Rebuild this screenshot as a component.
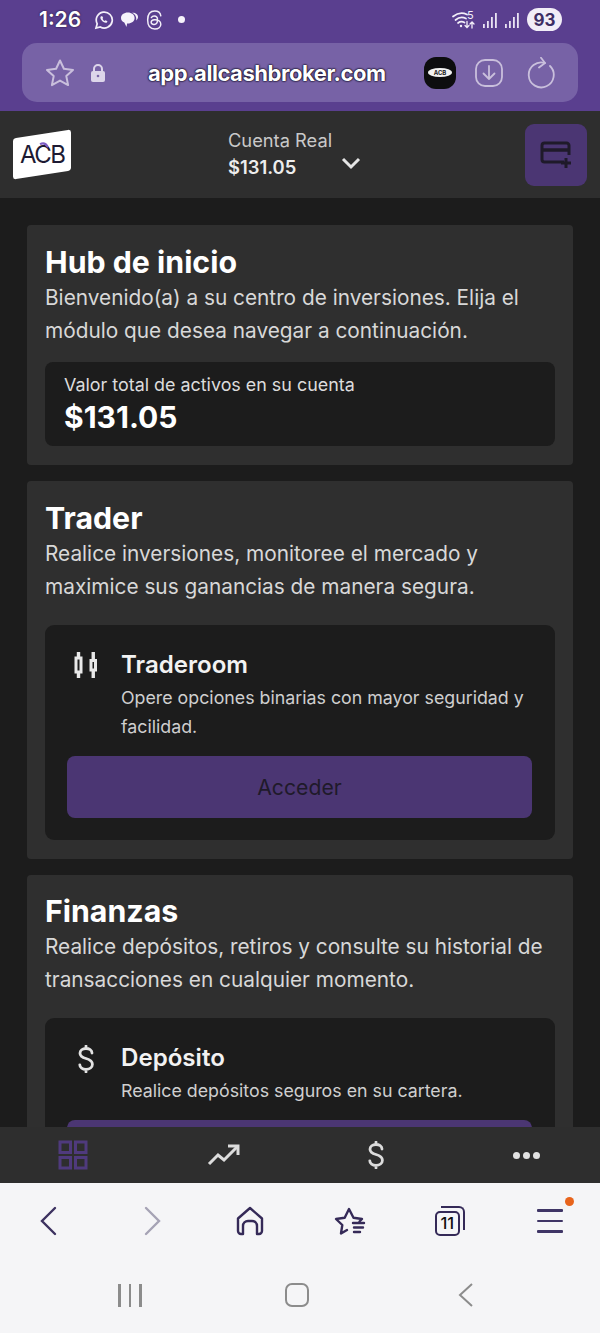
<div class="phone">
  <div class="chrome">
    <div class="status">
      <span class="time">1:26</span>
      <svg class="ic-wa" width="20" height="20" viewBox="0 0 20 20" fill="none" stroke="#f3eff9" stroke-width="1.7">
        <path d="M2 18l1.2-4.2A8 8 0 1 1 6.300 17z" />
        <path d="M7 6.200c-.9.8-.8 2.200.4 3.800 1.300 1.800 3 2.900 4.500 2.800 1 0 1.500-.7 1.500-1.500l-1.800-1-.8.800c-1-.4-1.800-1.200-2.300-2.300l.7-.8-.9-1.800z" fill="#f3eff9" stroke="none" />
      </svg>
      <svg class="ic-msg" width="19" height="19" viewBox="0 0 19 19" fill="#f6f3fb">
        <path d="M1 8c0-3.200 3-5.500 6.800-5.500 3.900 0 6.800 2.300 6.800 5.500s-3 5.500-6.800 5.500l-.7 0-.6 3.500-2.200-4.400C2.300 11.700 1 10 1 8z" />
        <path d="M12 2.800c3.300-.4 6 1.400 6 4.100 0 1.500-.8 2.700-2 3.500.3-1 .4-1.800.1-3C15.600 5.200 14 3.600 12 2.800z" />
      </svg>
      <svg class="ic-th" width="17" height="20" viewBox="1 .5 15 19" fill="none" stroke="#f3eff9" stroke-width="1.400" stroke-linecap="round">
        <path d="M14.500 6C14 3 12 1.500 8.800 1.500 4.500 1.500 2 4.500 2 10s2.500 8.500 6.800 8.500c3.500 0 5.700-2 5.700-4.500 0-2.800-2.500-4.500-6-4.300-2 .1-3.200 1-3.200 2.400 0 1.300 1.200 2.200 2.800 2.100 2.200-.1 3.300-1.700 3.300-4.200 0-2.300-1.200-3.700-3.200-3.700-1.200 0-2.100.5-2.700 1.400" />
      </svg>
      <span class="dot"></span>
      <span class="grow"></span>
      <svg class="ic-wifi" width="24" height="20" viewBox="0 0 24 20" fill="none" stroke="#f3eff9" stroke-width="1.700" stroke-linecap="round">
        <path d="M1 6.500C6 2.500 11 2.500 15 4.500" />
        <path d="M3.500 10C7 7 11 7 14 8.500" />
        <path d="M6 13c2-1.500 4.500-1.500 6.500-.5" />
        <circle cx="9" cy="16" r="1.200" fill="#f3eff9" stroke="none" />
        <path d="M15 11.500v6m-2-2l2 2 2-2" stroke-width="1.300" />
        <path d="M20 18v-6m-2 2l2-2 2 2" stroke-width="1.300" />
      </svg>
      <span class="wifi-num">5</span>
      <svg class="ic-sig" width="16" height="18" viewBox="0 0 16 18" fill="#e9e3f3">
        <rect x="1" y="13" width="1.800" height="4" />
        <rect x="5" y="10" width="1.800" height="7" />
        <rect x="9" y="6" width="1.800" height="11" />
        <rect x="13" y="2" width="1.800" height="15" />
      </svg>
      <svg class="ic-sig" width="16" height="18" viewBox="0 0 16 18" fill="#e9e3f3">
        <rect x="1" y="13" width="1.800" height="4" />
        <rect x="5" y="10" width="1.800" height="7" />
        <rect x="9" y="6" width="1.800" height="11" />
        <rect x="13" y="2" width="1.800" height="15" />
      </svg>
      <span class="batt">93</span>
    </div>

    <div class="urlbar">
      <svg class="u-star" width="32" height="32" viewBox="0 0 32 32" fill="none" stroke="#c9bfdc" stroke-width="2" stroke-linejoin="round">
        <path d="M16 3.500l3.900 8.300 9.100 1.100-6.700 6.200 1.800 9-8.100-4.500-8.100 4.500 1.800-9L3 12.900l9.100-1.100z" />
      </svg>
      <svg class="u-lock" width="16" height="20" viewBox="0 0 16 20">
        <path d="M4 9V6a4 4 0 0 1 8 0v3" fill="none" stroke="#ddd6ea" stroke-width="2" />
        <rect x="1" y="8" width="14" height="11" rx="2" fill="#ddd6ea" />
        <circle cx="8" cy="13" r="1.300" fill="#7a66a8" />
      </svg>
      <span class="url">app.allcashbroker.com</span>
      <span class="ext"><span class="ext-pill">ACB</span></span>
      <svg class="u-dl" width="30" height="30" viewBox="0 0 30 30" fill="none" stroke="#c9bfdc" stroke-width="1.800" stroke-linecap="round" stroke-linejoin="round">
        <rect x="2" y="2" width="26" height="26" rx="9" />
        <path d="M15 8v13M9.500 15.500L15 21l5.500-5.500" />
      </svg>
      <svg class="u-re" width="30" height="32" viewBox="0 0 30 32" fill="none" stroke="#c9bfdc" stroke-width="1.800" stroke-linecap="round" stroke-linejoin="round">
        <path d="M20 6A12.500 12.500 0 1 0 25 9" />
        <path d="M16 .8L20 6l-6 4.500" />
      </svg>
    </div>
  </div>

  <header class="topbar">
    <div class="logo">
      <span class="logo-card">
        <span class="logo-text">ACB</span>
        <svg class="logo-arc" width="12" height="7" viewBox="0 0 12 7" fill="none" stroke="#7d5cc4" stroke-width="2">
          <path d="M2 2.500c3-1.500 6-.8 8 3" />
        </svg>
      </span>
    </div>
    <div class="account">
      <div>
        <div class="acc-label">Cuenta Real</div>
        <div class="acc-value">$131.05</div>
      </div>
      <svg class="chev" width="20" height="13" viewBox="0 0 20 13" fill="none" stroke="#e5e5e5" stroke-width="3">
        <path d="M2 2l8 8 8-8" />
      </svg>
    </div>
    <button class="add-card" aria-label="Agregar tarjeta">
      <svg width="36" height="32" viewBox="0 0 36 32" fill="none" stroke="#1f1a2a" stroke-width="3">
        <path d="M26 23H6.500A2.500 2.500 0 0 1 4 20.500V6.500A2.500 2.500 0 0 1 6.500 4h22A2.500 2.500 0 0 1 31 6.500V16" />
        <path d="M4 11h27" stroke-width="3.500" />
        <path d="M28 19v10M23 24h10" />
      </svg>
    </button>
  </header>

  <main class="content">
    <section class="card">
      <h2>Hub de inicio</h2>
      <p class="lead">Bienvenido(a) a su centro de inversiones. Elija el módulo que desea navegar a continuación.</p>
      <div class="total">
        <div class="total-label">Valor total de activos en su cuenta</div>
        <div class="total-value">$131.05</div>
      </div>
    </section>

    <section class="card">
      <h2>Trader</h2>
      <p class="lead">Realice inversiones, monitoree el mercado y maximice sus ganancias de manera segura.</p>
      <div class="module">
        <div class="mod-head">
          <span class="mod-slot">
            <svg class="candles" width="24" height="26" viewBox="0 0 24 26" fill="none" stroke="#e8e8e8" stroke-width="3">
              <rect x="2" y="6" width="5" height="14" />
              <path d="M4.500 0v6M4.500 20v6" stroke-width="3.400" />
              <rect x="17" y="8.500" width="4.500" height="9.500" />
              <path d="M19.250 0v8.500M19.250 18v8" stroke-width="3.400" />
            </svg>
          </span>
          <div>
            <h3>Traderoom</h3>
            <p class="mod-text">Opere opciones binarias con mayor seguridad y facilidad.</p>
          </div>
        </div>
        <button class="access">Acceder</button>
      </div>
    </section>

    <section class="card">
      <h2>Finanzas</h2>
      <p class="lead">Realice depósitos, retiros y consulte su historial de transacciones en cualquier momento.</p>
      <div class="module">
        <div class="mod-head">
          <span class="mod-slot">
            <svg class="dollar" width="16" height="28" viewBox="0 0 16 28" fill="none" stroke="#e2e2e2" stroke-width="2.800" stroke-linecap="round">
              <path d="M14 8c0-3-2.800-4.500-6-4.500C4.500 3.500 2 5.300 2 8.200c0 3 2.500 4.300 6 5.300 3.500 1 6.400 2.400 6.400 5.800 0 3-2.800 5.200-6.400 5.200-3.500 0-6.200-1.900-6.200-4.700M8 1v2.500M8 24.500V27" />
            </svg>
          </span>
          <div>
            <h3>Depósito</h3>
            <p class="mod-text">Realice depósitos seguros en su cartera.</p>
          </div>
        </div>
        <button class="access">Acceder</button>
      </div>
    </section>
  </main>

  <nav class="tabs">
    <span class="tab">
      <svg width="30" height="30" viewBox="0 0 30 30" fill="none" stroke="#4f3a7d" stroke-width="3">
        <rect x="2" y="2" width="10.500" height="10.500" />
        <rect x="17.500" y="2" width="10.500" height="10.500" />
        <rect x="2" y="17.500" width="10.500" height="10.500" />
        <rect x="17.500" y="17.500" width="10.500" height="10.500" />
      </svg>
    </span>
    <span class="tab">
      <svg width="34" height="24" viewBox="0 0 34 24" fill="none" stroke="#dcdcdc" stroke-width="3">
        <path d="M2 21l9-9 6 5 13-13" />
        <path d="M21 3h10v9" />
      </svg>
    </span>
    <span class="tab">
      <svg width="16" height="28" viewBox="0 0 16 28" fill="none" stroke="#dcdcdc" stroke-width="2.800" stroke-linecap="round">
        <path d="M14 8c0-3-2.800-4.500-6-4.500C4.500 3.500 2 5.300 2 8.200c0 3 2.500 4.300 6 5.300 3.500 1 6.400 2.400 6.400 5.800 0 3-2.800 5.200-6.400 5.200-3.500 0-6.200-1.900-6.200-4.700M8 1v2.500M8 24.500V27" />
      </svg>
    </span>
    <span class="tab more"><i></i><i></i><i></i></span>
  </nav>

  <div class="browser">
    <div class="b-row">
      <span class="b-item">
        <svg width="20" height="32" viewBox="0 0 20 32" fill="none" stroke="#3d3260" stroke-width="2.400" stroke-linecap="round">
          <path d="M16 3L3 16l13 13" />
        </svg>
      </span>
      <span class="b-item">
        <svg class="fwd" width="20" height="32" viewBox="0 0 20 32" fill="none" stroke="#a6a3b5" stroke-width="2.400" stroke-linecap="round">
          <path d="M4 3l13 13L4 29" />
        </svg>
      </span>
      <span class="b-item">
        <svg class="home" width="30" height="32" viewBox="0 0 30 32" fill="none" stroke="#352a58" stroke-width="2.400" stroke-linejoin="round">
          <path d="M3 13.500L15 3l12 10.500V26a3 3 0 0 1-3 3h-2V21a5 5 0 0 0-5-5h-4a5 5 0 0 0-5 5v8H6a3 3 0 0 1-3-3z" />
        </svg>
      </span>
      <span class="b-item">
        <svg width="32" height="32" viewBox="0 0 32 32" fill="none" stroke="#352a58" stroke-width="2.400" stroke-linejoin="round" stroke-linecap="round">
          <path d="M13 25l-6 3.500 1.300-8.500L2 14l8.700-1.300L15 4l4.500 8.700L28 14l-2.500 2.500" />
          <path d="M19 18h11M20 22.500h9M20 27h6" />
        </svg>
      </span>
      <span class="b-item">
        <span class="tabs-count">
          <span class="tc-back"></span>
          <span class="tc-front">11</span>
        </span>
      </span>
      <span class="b-item">
        <span class="menu"><i></i><i></i><i></i><b></b></span>
      </span>
    </div>
    <div class="sys-row">
      <span class="sys-bars"><i></i><i></i><i></i></span>
      <span class="sys-home"></span>
      <svg width="16" height="26" viewBox="0 0 16 26" fill="none" stroke="#8c8c8c" stroke-width="2">
        <path d="M14 2L2 13l12 11" />
      </svg>
    </div>
  </div>
</div>

<style>
  :global(body) {
    margin: 0;
    background: #1c1c1c;
  }

  .phone {
    width: 600px;
    height: 1333px;
    display: flex;
    flex-direction: column;
    overflow: hidden;
    font-family: Inter, "Liberation Sans", sans-serif;
    color: #fff;
  }

  .chrome {
    height: 111px;
    flex: none;
    background: #5a3f8f;
    box-sizing: border-box;
  }

  .status {
    height: 43px;
    box-sizing: border-box;
    padding: 2px 38px 6px 39px;
    display: flex;
    align-items: center;
  }

  .time {
    font-size: 21px;
    font-weight: 600;
    width: 55px;
    text-shadow: 0 0 2px #120c20;
    color: #fff;
  }

  .ic-msg { margin-left: 6px; }
  .ic-th { margin-left: 7px; }
  .dot {
    width: 7px;
    height: 7px;
    border-radius: 50%;
    background: #f6f3fb;
    margin-left: 15px;
  }
  .grow { flex: 1; }
  .wifi-num {
    font-size: 11px;
    margin-left: -9px;
    margin-top: -10px;
    width: 9px;
    color: #f3eff9;
  }
  .ic-sig { margin-left: 6px; }
  .batt {
    margin-left: 7px;
    width: 35px;
    height: 23px;
    border-radius: 12px;
    background: #f1edf7;
    color: #3d2d63;
    font-size: 17px;
    font-weight: 700;
    display: flex;
    align-items: center;
    justify-content: center;
  }

  .urlbar {
    margin: 0 22px;
    height: 59px;
    background: #7762a6;
    border-radius: 15px;
    display: flex;
    align-items: center;
    padding: 0 22px;
    box-sizing: border-box;
  }

  .u-lock { margin-left: 14px; }
  .url {
    margin-left: 42px;
    width: 239px;
    white-space: nowrap;
    font-size: 22px;
    font-weight: 700;
    letter-spacing: -0.45px;
    text-shadow: 0 0 2px #120c20, 0 0 2px #120c20, 0 0 1px #120c20;
  }
  .ext {
    margin-left: 37px;
    width: 32px;
    height: 32px;
    background: #0d0d0f;
    border-radius: 12px;
    display: flex;
    align-items: center;
    justify-content: center;
    flex: none;
  }
  .ext-pill {
    width: 24px;
    height: 9px;
    background: #f2f2f2;
    border-radius: 50%;
    color: #222;
    font-size: 6px;
    font-weight: 700;
    line-height: 9px;
    text-align: center;
  }
  .u-dl { margin-left: 18px; flex: none; }
  .u-re { margin-left: 21px; flex: none; }

  .topbar {
    height: 87px;
    flex: none;
    background: #2e2e2e;
    display: flex;
    align-items: center;
    padding: 0 13px;
    box-sizing: border-box;
  }

  .logo { width: 215px; flex: none; }
  .logo-card {
    position: relative;
    display: flex;
    align-items: center;
    justify-content: center;
    width: 58px;
    height: 41px;
    background: #fff;
    border-radius: 3px;
    transform: skewY(-9deg);
  }
  .logo-text {
    font-size: 24px;
    font-weight: 400;
    letter-spacing: -1.5px;
    color: #1d1a33;
    transform: skewY(9deg);
  }
  .logo-arc {
    position: absolute;
    left: 25px;
    top: 8px;
    transform: skewY(9deg);
  }

  .account {
    flex: 1;
    display: flex;
    align-items: center;
    gap: 9px;
  }
  .acc-label {
    font-size: 18.3px;
    color: #c9c9c9;
    line-height: 25px;
  }
  .acc-value {
    font-size: 18.4px;
    font-weight: 600;
    color: #ededed;
    line-height: 29px;
  }
  .chev { margin-top: 18px; }

  .add-card {
    width: 62px;
    height: 62px;
    background: #4b3673;
    border: 0;
    border-radius: 9px;
    padding: 0;
    display: flex;
    align-items: center;
    justify-content: center;
  }

  .content {
    flex: 1;
    min-height: 0;
    overflow: hidden;
    background: #1c1c1c;
    padding: 27px 27px 0;
    display: flex;
    flex-direction: column;
    gap: 16px;
  }

  .card {
    flex: none;
    background: #2f2f2f;
    border-radius: 4px;
    padding: 18.5px 18px 19px;
  }

  h2 {
    margin: 0;
    font-size: 30.3px;
    font-weight: 700;
    line-height: 37px;
    color: #fff;
  }

  .lead {
    margin: 0;
    font-size: 20.8px;
    line-height: 33px;
    color: #d8d8d8;
  }

  .total {
    margin-top: 15.6px;
    background: #1c1c1c;
    border-radius: 8px;
    height: 84px;
    padding: 11px 19px 0;
    box-sizing: border-box;
  }
  .total-label {
    font-size: 17.9px;
    line-height: 24px;
    color: #dcdcdc;
  }
  .total-value {
    font-size: 30px;
    font-weight: 700;
    line-height: 40px;
    color: #fff;
  }

  .module {
    margin-top: 22.1px;
    background: #1c1c1c;
    border-radius: 9px;
    padding: 22px 23px 22px 22px;
  }

  .mod-head {
    display: flex;
  }
  .mod-slot {
    width: 54px;
    flex: none;
  }
  .candles {
    display: block;
    margin: 5px 0 0 7px;
  }
  .dollar {
    display: block;
    margin: 5px 0 0 11px;
  }

  h3 {
    margin: 0;
    font-size: 24.1px;
    font-weight: 600;
    line-height: 36px;
    color: #f2f2f2;
  }

  .mod-text {
    margin: 0;
    font-size: 17.8px;
    line-height: 29px;
    color: #cfcfcf;
  }

  .access {
    display: block;
    width: 100%;
    height: 62px;
    margin-top: 15px;
    background: #4b3673;
    color: #1f1a2a;
    border: 0;
    border-radius: 8px;
    font-family: inherit;
    font-size: 21.2px;
  }

  .tabs {
    height: 56px;
    flex: none;
    background: #2e2e2e;
    display: flex;
    align-items: center;
    padding: 0 56px;
    justify-content: space-between;
  }
  .tab {
    width: 34px;
    display: flex;
    align-items: center;
    justify-content: center;
  }
  .more { gap: 3px; }
  .more i {
    width: 7px;
    height: 7px;
    flex: none;
    border-radius: 50%;
    background: #e2e2e2;
  }

  .browser {
    height: 150px;
    flex: none;
    background: #f5f5f7;
    display: flex;
    flex-direction: column;
  }

  .b-row {
    height: 76px;
    padding: 0 30px 0 29px;
    display: flex;
    align-items: center;
    justify-content: space-between;
  }
  .b-item {
    width: 40px;
    display: flex;
    align-items: center;
    justify-content: center;
  }
  .fwd { margin-left: 6px; }
  .home { margin-left: 2px; }

  .tabs-count {
    position: relative;
    width: 30px;
    height: 30px;
    display: block;
  }
  .tc-back {
    position: absolute;
    top: 0;
    right: 0;
    width: 24px;
    height: 24px;
    border: 2.400px solid #352a58;
    border-left: 0;
    border-bottom: 0;
    border-radius: 0 6px 0 0;
    box-sizing: border-box;
  }
  .tc-front {
    position: absolute;
    left: 0;
    bottom: 0;
    width: 25px;
    height: 25px;
    box-sizing: border-box;
    border: 2.400px solid #352a58;
    background: #f5f5f7;
    border-radius: 5px;
    color: #111;
    font-size: 16.5px;
    font-weight: 500;
    line-height: 21px;
    text-align: center;
  }

  .menu {
    position: relative;
    width: 26px;
    display: flex;
    flex-direction: column;
    gap: 8px;
  }
  .menu i {
    height: 2.500px;
    background: #3f3566;
    border-radius: 1px;
  }
  .menu b {
    position: absolute;
    top: -12px;
    right: -11px;
    width: 9px;
    height: 9px;
    border-radius: 50%;
    background: #e8641c;
  }

  .sys-row {
    flex: 1;
    display: flex;
    align-items: center;
    padding: 0 0 0 118px;
    margin-top: -2px;
  }
  .sys-bars {
    display: flex;
    gap: 8px;
  }
  .sys-bars i {
    width: 2.500px;
    height: 23px;
    background: #8c8c8c;
  }
  .sys-home {
    margin: 0 149px 0 143px;
    width: 20px;
    height: 20px;
    border: 2.400px solid #8c8c8c;
    border-radius: 7px;
  }
</style>
